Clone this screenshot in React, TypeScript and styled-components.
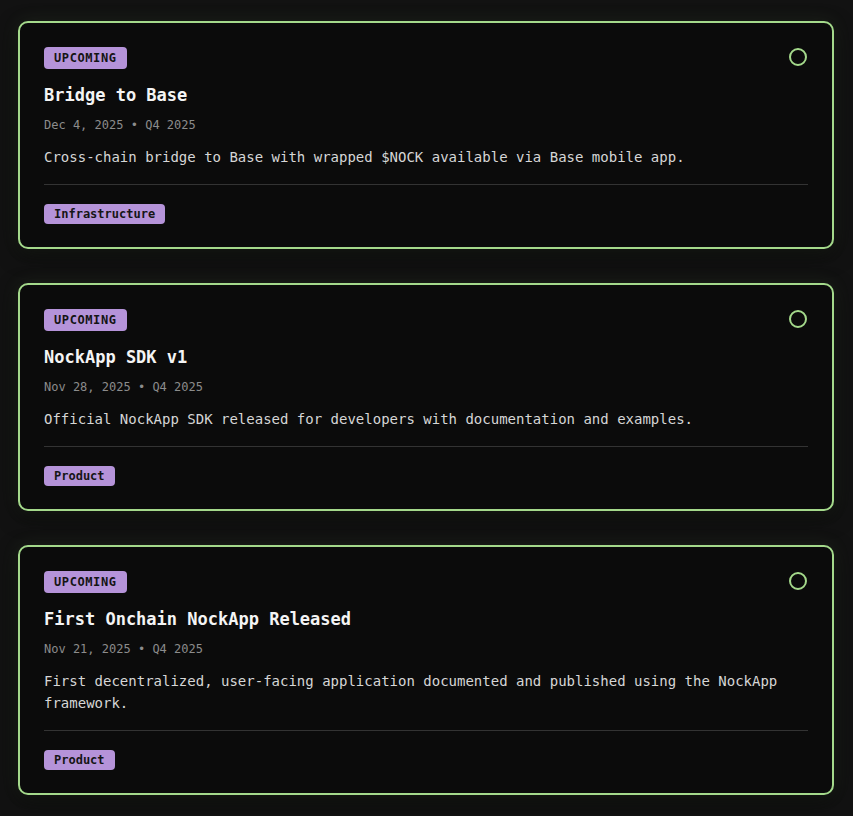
import styled, { createGlobalStyle } from 'styled-components'

const GlobalStyle = createGlobalStyle`
  html, body {
    margin: 0;
    padding: 0;
    background: #121212;
  }
  * {
    box-sizing: border-box;
  }
`

const milestones = [
  {
    status: 'Upcoming',
    title: 'Bridge to Base',
    date: 'Dec 4, 2025',
    quarter: 'Q4 2025',
    description:
      'Cross-chain bridge to Base with wrapped $NOCK available via Base mobile app.',
    category: 'Infrastructure',
  },
  {
    status: 'Upcoming',
    title: 'NockApp SDK v1',
    date: 'Nov 28, 2025',
    quarter: 'Q4 2025',
    description:
      'Official NockApp SDK released for developers with documentation and examples.',
    category: 'Product',
  },
  {
    status: 'Upcoming',
    title: 'First Onchain NockApp Released',
    date: 'Nov 21, 2025',
    quarter: 'Q4 2025',
    description:
      'First decentralized, user-facing application documented and published using the NockApp framework.',
    category: 'Product',
  },
]

const Page = styled.main`
  display: flex;
  flex-direction: column;
  gap: 34px;
  padding: 21px 19px 20px 18px;
  font-family: 'DejaVu Sans Mono', 'Liberation Mono', monospace;
`

const Card = styled.article`
  background: #0b0b0b;
  border: 2px solid #a4d98b;
  border-radius: 10px;
  padding: 24px 24px 23px;
  box-shadow: 0 0 18px rgba(164, 217, 139, 0.1), 0 6px 20px rgba(0, 0, 0, 0.6);
`

const Top = styled.div`
  display: flex;
  justify-content: space-between;
  align-items: flex-start;
`

const StatusBadge = styled.span`
  display: inline-flex;
  align-items: center;
  height: 22px;
  padding: 0 10px;
  border-radius: 4px;
  background: #b593d9;
  color: #141414;
  font-size: 12px;
  font-weight: 700;
  letter-spacing: 0.6px;
  text-transform: uppercase;
`

const StatusDot = styled.span`
  width: 18px;
  height: 18px;
  margin-top: 1px;
  margin-right: 1px;
  border: 2px solid #a4d98b;
  border-radius: 50%;
`

const Title = styled.h2`
  margin: 14px 0 0;
  font-size: 17px;
  line-height: 24px;
  font-weight: 700;
  color: #f4f4f4;
`

const Meta = styled.div`
  margin-top: 9px;
  font-size: 12px;
  line-height: 18px;
  color: #8c8c8c;
`

const Description = styled.p`
  margin: 12px 0 0;
  font-size: 14px;
  line-height: 22px;
  color: #d6d6d6;
`

const Divider = styled.hr`
  margin: 16px 0 19px;
  border: 0;
  border-top: 1px solid #333;
`

const Tags = styled.div`
  display: flex;
  gap: 8px;
`

const Tag = styled.span`
  display: inline-flex;
  align-items: center;
  height: 20px;
  padding: 0 10px;
  border-radius: 4px;
  background: #b593d9;
  color: #151515;
  font-size: 12px;
  font-weight: 700;
`

export default function App() {
  return (
    <>
      <GlobalStyle />
      <Page>
        {milestones.map((m) => (
          <Card key={m.title}>
            <Top>
              <StatusBadge>{m.status}</StatusBadge>
              <StatusDot />
            </Top>
            <Title>{m.title}</Title>
            <Meta>
              {m.date} • {m.quarter}
            </Meta>
            <Description>{m.description}</Description>
            <Divider />
            <Tags>
              <Tag>{m.category}</Tag>
            </Tags>
          </Card>
        ))}
      </Page>
    </>
  )
}
